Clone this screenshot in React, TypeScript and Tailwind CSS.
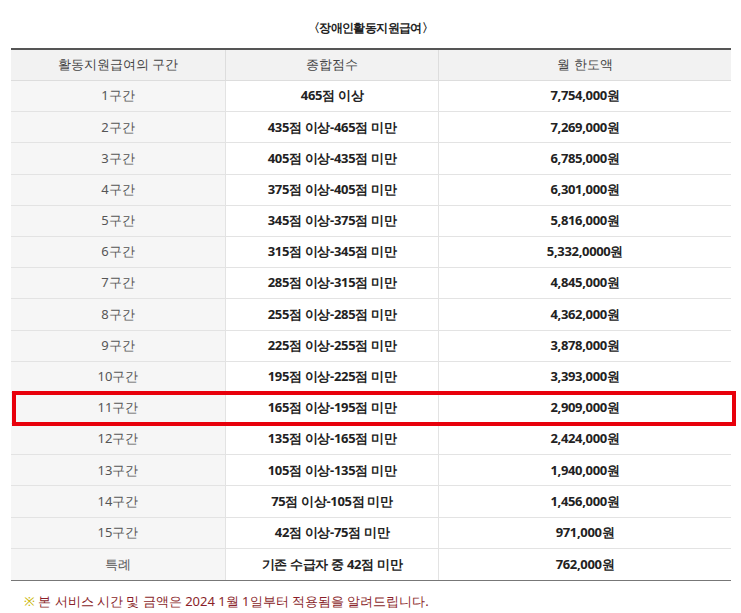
const rows: [string, string, string][] = [
  ["1구간", "465점 이상", "7,754,000원"],
  ["2구간", "435점 이상-465점 미만", "7,269,000원"],
  ["3구간", "405점 이상-435점 미만", "6,785,000원"],
  ["4구간", "375점 이상-405점 미만", "6,301,000원"],
  ["5구간", "345점 이상-375점 미만", "5,816,000원"],
  ["6구간", "315점 이상-345점 미만", "5,332,0000원"],
  ["7구간", "285점 이상-315점 미만", "4,845,000원"],
  ["8구간", "255점 이상-285점 미만", "4,362,000원"],
  ["9구간", "225점 이상-255점 미만", "3,878,000원"],
  ["10구간", "195점 이상-225점 미만", "3,393,000원"],
  ["11구간", "165점 이상-195점 미만", "2,909,000원"],
  ["12구간", "135점 이상-165점 미만", "2,424,000원"],
  ["13구간", "105점 이상-135점 미만", "1,940,000원"],
  ["14구간", "75점 이상-105점 미만", "1,456,000원"],
  ["15구간", "42점 이상-75점 미만", "971,000원"],
  ["특례", "기존 수급자 중 42점 미만", "762,000원"],
];

export default function App() {
  return (
    <div className="w-[741px] h-[613px] bg-white text-[#222] font-['Noto_Sans_CJK_KR',sans-serif] text-[13px]">
      <div className="pt-[19px] h-[48px] text-center text-[12px] font-bold tracking-tighter">〈장애인활동지원급여〉</div>
      <div className="relative mx-[11px] w-[720px] border-t-2 border-[#555] border-b border-b-[#777]">
        <div className="grid grid-cols-[214px_213px_293px] h-[31px] bg-[#f2f2f2] text-[#444] border-b border-[#ddd]">
          <div className="flex items-center justify-center">활동지원급여의 구간</div>
          <div className="flex items-center justify-center border-l border-[#ddd]">종합점수</div>
          <div className="flex items-center justify-center border-l border-[#ddd]">월 한도액</div>
        </div>
        {rows.map(([a, b, c], i) => (
          <div key={i} className={`grid grid-cols-[214px_213px_293px] h-[31.2px] ${i < rows.length - 1 ? "border-b border-[#e3e3e3]" : ""}`}>
            <div className="flex items-center justify-center bg-[#f6f6f6] text-[#555]">{a}</div>
            <div className="flex items-center justify-center border-l border-[#e3e3e3] font-bold tracking-tight">{b}</div>
            <div className="flex items-center justify-center border-l border-[#e3e3e3] font-bold tracking-tight">{c}</div>
          </div>
        ))}
        <div className="absolute left-[1px] right-[-5px] top-[341px] h-[35px] border-[4px] border-[#e8000b]" />
      </div>
      <div className="mt-[11px] ml-[24px] text-[13px] text-[#8a1f2a]">
        <span className="text-[#c8b400]">※</span> 본 서비스 시간 및 금액은 2024 1월 1일부터 적용됨을 알려드립니다.
      </div>
    </div>
  );
}
